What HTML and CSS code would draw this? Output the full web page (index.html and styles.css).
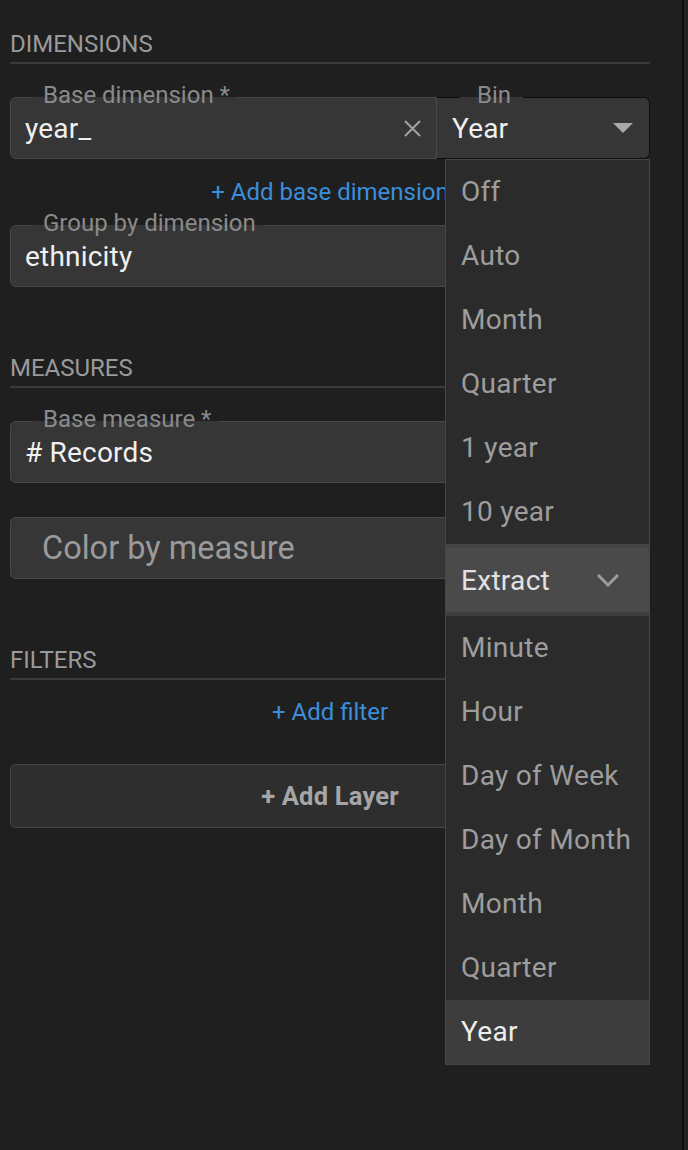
FILE: index.html
```html
<!DOCTYPE html>
<html lang="en">
<head>
<meta charset="utf-8">
<title>Layer editor</title>
<link rel="stylesheet" href="styles.css">
</head>
<body>
<div class="panel">
  <h2 class="section-title">DIMENSIONS</h2>
  <div class="row">
    <div class="field field-base">
      <span class="field-label">Base dimension *</span>
      <span class="field-value">year_</span>
      <svg class="clear-icon" width="19" height="19" viewBox="0 0 19 19"><path d="M2 2 L17 17 M17 2 L2 17" stroke="#a3a3a3" stroke-width="2" fill="none"/></svg>
    </div>
    <div class="select">
      <span class="field-label bin-label">Bin</span>
      <span class="field-value">Year</span>
      <svg class="caret" width="20" height="10" viewBox="0 0 20 10"><polygon points="0,0 20,0 10,10" fill="#a8a8a8"/></svg>
      <ul class="menu">
        <li class="menu-item">Off</li>
        <li class="menu-item">Auto</li>
        <li class="menu-item">Month</li>
        <li class="menu-item">Quarter</li>
        <li class="menu-item">1 year</li>
        <li class="menu-item">10 year</li>
        <li class="menu-group">
          <span>Extract</span>
          <svg width="24" height="14" viewBox="0 0 24 14"><polyline points="2,2 12,12 22,2" stroke="#9c9c9c" stroke-width="3" fill="none"/></svg>
        </li>
        <li class="menu-item">Minute</li>
        <li class="menu-item">Hour</li>
        <li class="menu-item">Day of Week</li>
        <li class="menu-item">Day of Month</li>
        <li class="menu-item">Month</li>
        <li class="menu-item">Quarter</li>
        <li class="menu-item selected">Year</li>
      </ul>
    </div>
  </div>
  <div class="link-row"><span class="link">+ Add base dimension</span></div>
  <div class="field field-after-link">
    <span class="field-label">Group by dimension</span>
    <span class="field-value">ethnicity</span>
  </div>

  <h2 class="section-title spaced">MEASURES</h2>
  <div class="row">
    <div class="field field-full">
      <span class="field-label">Base measure *</span>
      <span class="field-value"># Records</span>
    </div>
  </div>
  <div class="field placeholder">Color by measure</div>

  <h2 class="section-title spaced">FILTERS</h2>
  <div class="link-row link-filter"><span class="link">+ Add filter</span></div>
  <div class="add-layer">+ Add Layer</div>
</div>
</body>
</html>
```

FILE: styles.css
```css
html, body {
  margin: 0;
  padding: 0;
}
body {
  background: #232323;
  font-family: Roboto, "Noto Sans", "Liberation Sans", sans-serif;
  height: 1150px;
  overflow: hidden;
}
.panel {
  width: 684px;
  box-sizing: border-box;
  min-height: 1150px;
  padding: 30px 32px 0 10px;
  background: #1f1f1f;
  border-right: 2px solid #0e0e0e;
}
.section-title {
  margin: 0;
  font-size: 24px;
  font-weight: 400;
  line-height: 28px;
  color: #9a9a9a;
  padding-bottom: 4px;
  border-bottom: 2px solid #3a3a3a;
}
.section-title.spaced {
  margin-top: 67px;
}
.row {
  display: flex;
  margin-top: 33px;
}
.field {
  position: relative;
  box-sizing: border-box;
  height: 62px;
  background: #363636;
  border: 1px solid #484848;
  border-radius: 6px;
  display: flex;
  align-items: center;
  justify-content: space-between;
  padding: 0 14px;
}
.field-base {
  flex: 1;
  border-radius: 6px 0 0 6px;
}
.field-full {
  flex: 1;
}
.field-after-link {
  margin-top: 19px;
}
.field-label {
  position: absolute;
  top: -16px;
  left: 22px;
  padding: 0 8px 0 10px;
  font-size: 24px;
  line-height: 26px;
  color: #8a8a8a;
  white-space: nowrap;
  background: linear-gradient(to bottom, #1f1f1f 15px, #363636 15px);
}
.bin-label {
  left: 23px;
  padding: 0 12px 0 17px;
}
.field-value {
  font-size: 28px;
  letter-spacing: 0.2px;
  color: #f0f0f0;
}
.clear-icon {
  display: block;
}
.select {
  position: relative;
  width: 213px;
  box-sizing: border-box;
  height: 62px;
  background: #363636;
  border: 1px solid #0c0c0c;
  border-left: none;
  border-radius: 0 6px 6px 0;
  display: flex;
  align-items: center;
  justify-content: space-between;
  padding: 0 16px 0 15px;
}
.caret {
  display: block;
}
.menu {
  position: absolute;
  top: 61px;
  left: 8px;
  right: -1px;
  z-index: 5;
  margin: 0;
  padding: 0;
  list-style: none;
  background: #2b2b2b;
  border: 1px solid #454545;
}
.menu-item {
  height: 64px;
  line-height: 64px;
  padding-left: 15px;
  font-size: 28px;
  letter-spacing: 0.3px;
  color: #9d9d9d;
  white-space: nowrap;
}
.menu-item.selected {
  background: #3d3d3d;
  color: #eeeeee;
}
.menu-group {
  height: 72px;
  box-sizing: border-box;
  display: flex;
  align-items: center;
  justify-content: space-between;
  padding: 0 29px 0 15px;
  background: #4a4a4a;
  border-top: 4px solid #444444;
  border-bottom: 4px solid #3e3e3e;
  font-size: 28px;
  letter-spacing: 0.3px;
  color: #e2e2e2;
}
.menu-group svg {
  display: block;
}
.link-row {
  margin-top: 19px;
  text-align: center;
  font-size: 24px;
  line-height: 28px;
}
.link-filter {
  margin-top: 18px;
}
.link {
  color: #3b8edc;
}
.placeholder {
  margin-top: 34px;
  padding-left: 31px;
  font-size: 32.5px;
  color: #9a9a9a;
}
.add-layer {
  margin-top: 38px;
  height: 64px;
  box-sizing: border-box;
  background: #2e2e2e;
  border: 1px solid #464646;
  border-radius: 6px;
  display: flex;
  align-items: center;
  justify-content: center;
  font-size: 25.5px;
  font-weight: 700;
  letter-spacing: 0.2px;
  color: #a6a6a6;
}
```
